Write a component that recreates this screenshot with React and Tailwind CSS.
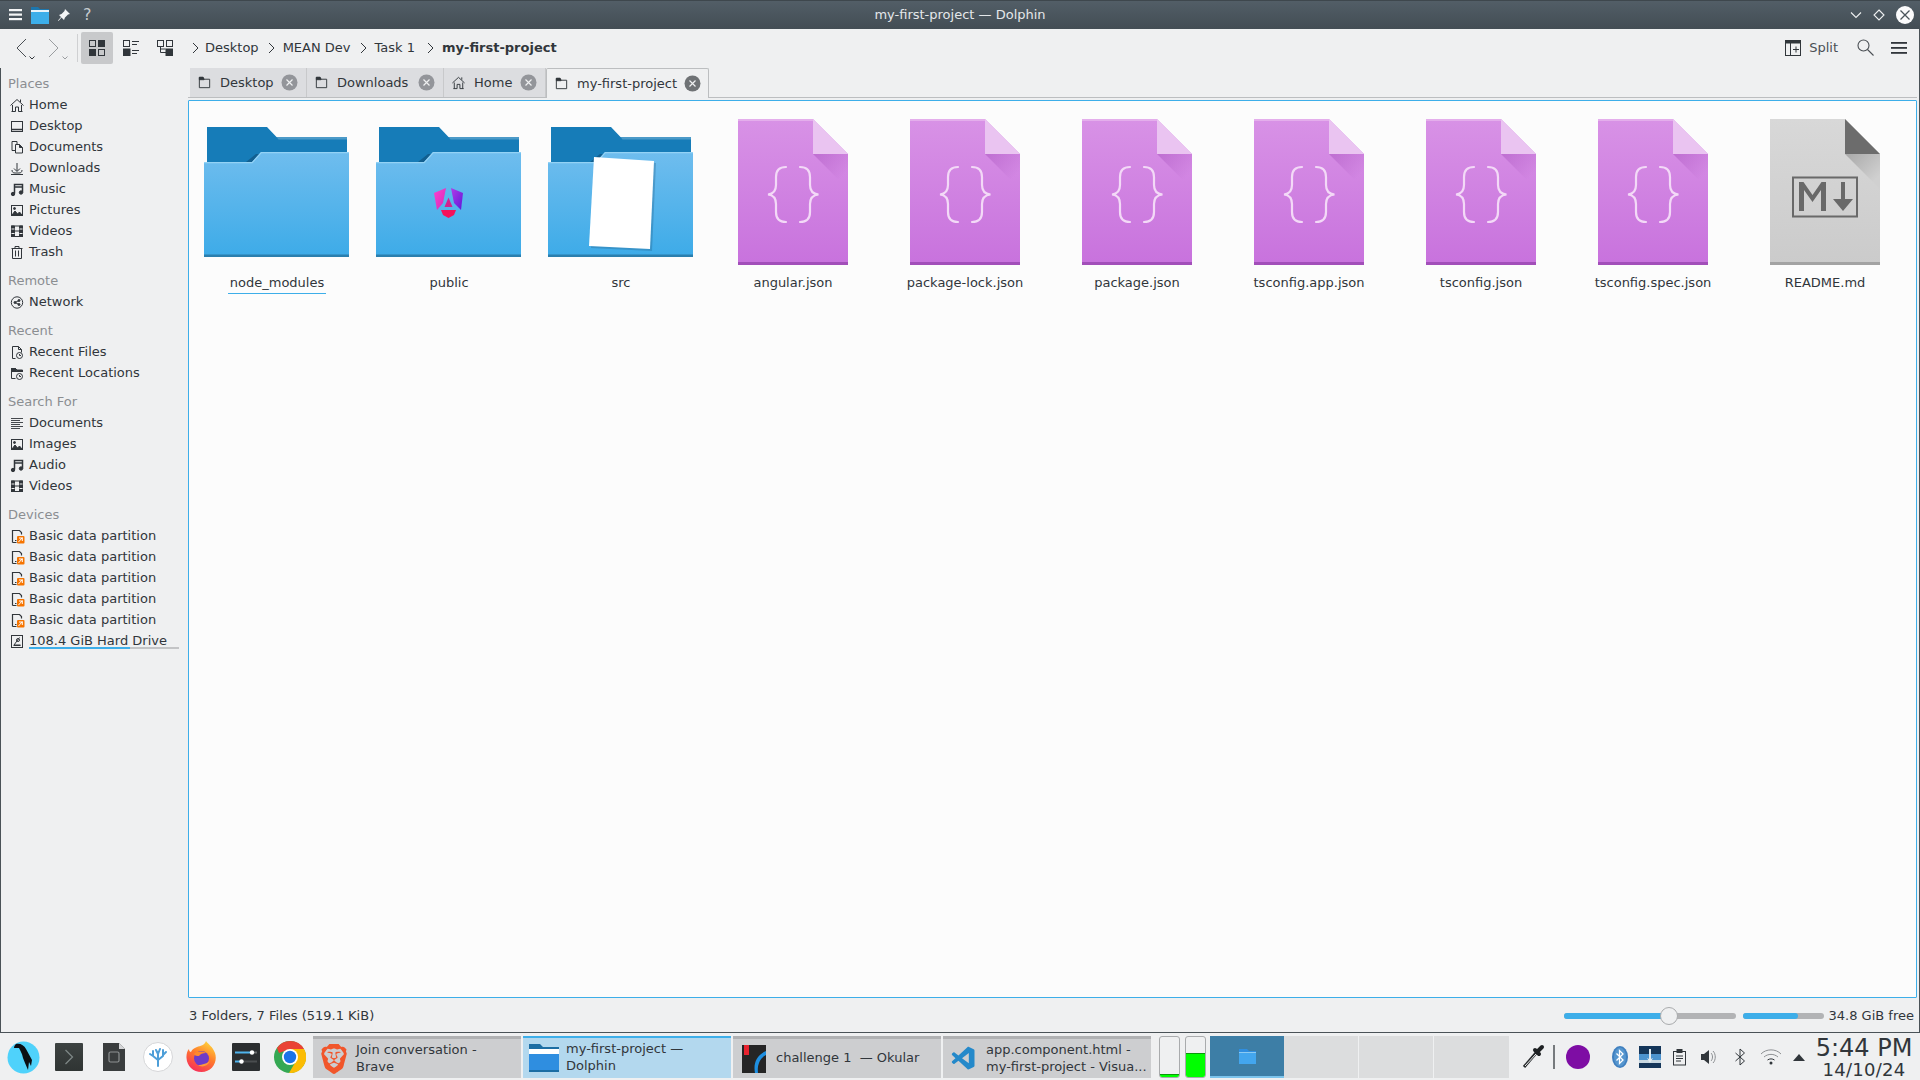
import React from 'react';
import { SiBrave } from 'react-icons/si';
import { VscVscode } from 'react-icons/vsc';

// small 16px monochrome glyphs for sidebar and tabs
const Glyph = ({ children, size = 16, className = '' }) => (
  <svg width={size} height={size} viewBox="0 0 16 16" fill="none" stroke="#31363b" strokeWidth="1" className={`shrink-0 ${className}`}>
    {children}
  </svg>
);

const glyphs = {
  home: <path d="M3.5 14.5V8M12.5 14.5V8M1.5 8.5L8 2.5l6.5 6M11.5 5V2.5M2.5 14.5h4V10h3v4.5h4" />,
  desktop: <><rect x="2.5" y="3.5" width="11" height="10" /><path d="M2.5 11.5h11" strokeWidth="1.5" /></>,
  documents: <><path d="M3 2.5h5v9H3z" /><path d="M6.5 5.5h4l3 3v5.5h-7z" fill="#eff0f1" /><path d="M10.5 5.5v3h3" fill="#31363b" /></>,
  downloads: <path d="M8 3v8M5 8.5l3 3 3-3M3 10c0 2 1 3 3 3h4c2 0 3-1 3-3M2 14.5h12" />,
  music: <><path d="M5.5 12.5V3.5h8v8M5.5 6h8" strokeWidth="1.5" /><circle cx="4" cy="13" r="1.7" fill="#31363b" /><circle cx="12" cy="11.5" r="1.7" fill="#31363b" /></>,
  pictures: <><rect x="2.5" y="3.5" width="11" height="10" /><path d="M3 13l3-4 2.5 3 2-2 2.5 3z" fill="#31363b" /><circle cx="5.5" cy="6.5" r="1" fill="#31363b" /></>,
  videos: <><rect x="2.5" y="3" width="11" height="10.5" strokeWidth="1" /><path d="M2.5 3h3v10.5h-3zM10.5 3h3v10.5h-3z" fill="#31363b" /><path d="M5 8h6M2.5 6h3M2.5 10.5h3M10.5 6h3M10.5 10.5h3" stroke="#31363b" /><path d="M2.5 6h3M2.5 10.5h3M10.5 6h3M10.5 10.5h3" stroke="#eff0f1" /></>,
  trash: <path d="M2.5 4.5h11M6 4.5V2.5h4v2M3.5 4.5v10h9v-10M6.5 6.5v6M9.5 6.5v6" />,
  network: <><circle cx="8" cy="8.5" r="5.7" /><circle cx="6" cy="8.5" r="1" fill="#31363b" /><circle cx="10" cy="6.5" r="1" fill="#31363b" /><circle cx="10" cy="10.5" r="1" fill="#31363b" /><path d="M6 8.5l4-2M6 8.5l4 2" /></>,
  recentFiles: <><path d="M3.5 14.5v-12h6l3 3v3M3.5 14.5h3M9.5 2.5v3h3" /><circle cx="10.5" cy="11.5" r="3" fill="#eff0f1" /><path d="M10.5 10v1.5h1.5" /></>,
  recentLocations: <><path d="M2.5 13.5v-10h4l1.5 1.5h5.5v2M2.5 13.5h4M2.5 3.5h4v3h-4z" fill="none" /><path d="M2.5 3.5h4l1 2h6v1h-11z" fill="#31363b" /><circle cx="10.5" cy="11.5" r="3" fill="#eff0f1" /><path d="M10.5 10v1.5h1.5" /></>,
  lines: <path d="M2 3.5h12M2 5.5h9M2 7.5h12M2 9.5h9M2 11.5h12M2 13.5h9" strokeWidth="0.9" />,
  partition: <><path d="M3.5 14.5v-12h7l2 2v2M3.5 14.5h4M6 12.5h1.5" strokeWidth="1.2" /><rect x="8" y="8" width="7.5" height="7.5" rx="1" fill="#f67400" stroke="none" /><path d="M9.5 14l4-4.5M10 10h3.3v3" stroke="#fff" strokeWidth="1" /></>,
  drive: <><rect x="2.5" y="2.5" width="11" height="12" /><path d="M10.5 4.5L5 12h6.5M4.5 12.5h7" /><circle cx="9" cy="7" r="1.5" /></>,
  folder: <><path d="M2.5 13.5v-11h4l1 2h6v9z" /><path d="M2.5 2.5h4l1 2.5h-5z" fill="#31363b" /></>,
};

const Section = ({ title, items }) => (
  <div className="mb-[8px]">
    <div className="h-[21px] flex items-center pl-[7px] text-[#8b8e91]">{title}</div>
    {items.map((it, i) => (
      <div key={i} className="relative h-[21px] flex items-center pl-[8px] gap-[4px]">
        <Glyph>{glyphs[it.icon]}</Glyph>
        <span className="whitespace-nowrap">{it.label}</span>
        {it.bar && (
          <div className="absolute left-[28px] top-[17px] w-[150px] h-[2px] bg-[#c3c4c6]">
            <div className="w-[101px] h-[2px] bg-[#3daee9]" />
          </div>
        )}
      </div>
    ))}
  </div>
);

const sidebar = [
  { title: 'Places', items: [
    { icon: 'home', label: 'Home' }, { icon: 'desktop', label: 'Desktop' }, { icon: 'documents', label: 'Documents' },
    { icon: 'downloads', label: 'Downloads' }, { icon: 'music', label: 'Music' }, { icon: 'pictures', label: 'Pictures' },
    { icon: 'videos', label: 'Videos' }, { icon: 'trash', label: 'Trash' },
  ] },
  { title: 'Remote', items: [{ icon: 'network', label: 'Network' }] },
  { title: 'Recent', items: [{ icon: 'recentFiles', label: 'Recent Files' }, { icon: 'recentLocations', label: 'Recent Locations' }] },
  { title: 'Search For', items: [
    { icon: 'lines', label: 'Documents' }, { icon: 'pictures', label: 'Images' }, { icon: 'music', label: 'Audio' }, { icon: 'videos', label: 'Videos' },
  ] },
  { title: 'Devices', items: [
    { icon: 'partition', label: 'Basic data partition' }, { icon: 'partition', label: 'Basic data partition' },
    { icon: 'partition', label: 'Basic data partition' }, { icon: 'partition', label: 'Basic data partition' },
    { icon: 'partition', label: 'Basic data partition' }, { icon: 'drive', label: '108.4 GiB Hard Drive', bar: true },
  ] },
];

const Close = ({ active }) => (
  <svg width="17" height="17" viewBox="0 0 17 17" className="shrink-0">
    <circle cx="8.5" cy="8.5" r="8" fill={active ? '#6f7275' : '#93959a'} />
    <path d="M5.5 5.5l6 6M11.5 5.5l-6 6" stroke="#eff0f1" strokeWidth="1.2" />
  </svg>
);

const tabs = [
  { label: 'Desktop', icon: 'folder', w: 'w-[117px]' },
  { label: 'Downloads', icon: 'folder', w: 'w-[137px]' },
  { label: 'Home', icon: 'home', w: 'w-[102px]' },
];

const FolderIcon = ({ id, children }) => (
  <svg width="145" height="130" viewBox="0 0 145 130" className="-ml-[2px]">
    <defs>
      <linearGradient id={`fold-${id}`} x1="0" y1="0" x2="0" y2="1">
        <stop offset="0" stopColor="#6fbdee" />
        <stop offset="1" stopColor="#3dabe8" />
      </linearGradient>
    </defs>
    <path d="M3 0H63L72.5 10H143V40H3Z" fill="#167cb8" />
    <path d="M72.5 10H143V12.5H74.5Z" fill="#4c9ac8" />
    <path d="M3 35H42L52 27H57V35H3Z" fill="#115f90" />
    <path d="M0 35H48L57 25H145V130H0Z" fill={`url(#fold-${id})`} />
    <path d="M0 35H48L57 25H145V26.2H57.5L48.5 36.2H0Z" fill="#93d2f5" />
    <rect x="0" y="127.5" width="145" height="2.5" fill="#2b7fae" />
    {children}
  </svg>
);

const AngularMark = () => (
  <g transform="translate(0 3)">
    <defs>
      <linearGradient id="ng-l" x1="0" y1="0" x2="1" y2="1">
        <stop offset="0" stopColor="#ff3fd0" />
        <stop offset="1" stopColor="#d22bb8" />
      </linearGradient>
      <linearGradient id="ng-r" x1="0" y1="0" x2="1" y2="1">
        <stop offset="0" stopColor="#b13be8" />
        <stop offset="1" stopColor="#5f17d8" />
      </linearGradient>
    </defs>
    <path d="M70 58L58 63L61 80L67 73Z" fill="url(#ng-l)" />
    <path d="M75 58L87 63L85 80L78 73Z" fill="url(#ng-r)" />
    <path d="M72.5 67.5L76.5 77H68.5Z" fill="#d6208e" />
    <path d="M65 80H80L78 85L72.5 88L67 85Z" fill="#f5115a" />
  </g>
);

const PaperMark = () => (
  <g>
    <path d="M48 32L108 36L104 124L43 121Z" fill="#25658f" opacity="0.35" />
    <path d="M46 30L106 34L102 122L41 119Z" fill="#fff" />
  </g>
);

const JsonIcon = ({ id }) => (
  <svg width="110" height="146" viewBox="0 0 110 146">
    <defs>
      <linearGradient id={`doc-${id}`} x1="0" y1="0" x2="0" y2="1">
        <stop offset="0" stopColor="#d892e6" />
        <stop offset="1" stopColor="#c872dd" />
      </linearGradient>
      <linearGradient id={`shade-${id}`} x1="0" y1="0" x2="1" y2="1">
        <stop offset="0" stopColor="#b765cb" stopOpacity="0.75" />
        <stop offset="0.75" stopColor="#b765cb" stopOpacity="0" />
      </linearGradient>
    </defs>
    <path d="M0 0H75L110 35V146H0Z" fill={`url(#doc-${id})`} />
    <path d="M0 0H75V2H0Z" fill="#e4aeec" />
    <path d="M75 35H110V70Z" fill={`url(#shade-${id})`} />
    <path d="M75 0L110 35H75Z" fill="#eac4f1" />
    <rect x="0" y="143" width="110" height="3" fill="#a24fb9" />
    <g fill="none" stroke="#f3d9f7" strokeWidth="2.2" strokeLinecap="round">
      <path d="M48 48C41 48 38 52 38 58V66C38 72 35 75 30 75.5C35 76 38 79 38 85V93C38 99 41 103 48 103" />
      <path d="M62 48C69 48 72 52 72 58V66C72 72 75 75 80.5 75.5C75 76 72 79 72 85V93C72 99 69 103 62 103" />
    </g>
  </svg>
);

const MarkdownIcon = () => (
  <svg width="110" height="146" viewBox="0 0 110 146">
    <defs>
      <linearGradient id="md-body" x1="0" y1="0" x2="0" y2="1">
        <stop offset="0" stopColor="#d8d8d8" />
        <stop offset="1" stopColor="#cbcbcb" />
      </linearGradient>
      <linearGradient id="md-shade" x1="0" y1="0" x2="1" y2="1">
        <stop offset="0" stopColor="#a8a8a8" />
        <stop offset="0.8" stopColor="#d0d0d0" />
      </linearGradient>
    </defs>
    <path d="M0 0H75L110 35V146H0Z" fill="url(#md-body)" />
    <path d="M75 35H110V70Z" fill="url(#md-shade)" />
    <path d="M75 0L110 35H75Z" fill="#6c6c6c" />
    <rect x="0" y="143" width="110" height="3" fill="#a3a3a3" />
    <rect x="23" y="58.5" width="64" height="39" fill="none" stroke="#696969" strokeWidth="2" />
    <path d="M29 92V63H33.5L42.5 76L51.5 63H56V92H51V71L42.5 83L34 71V92Z" fill="#696969" />
    <path d="M71 63H75V80H83L73 92L63 80H71Z" fill="#696969" />
  </svg>
);

const files = [
  { name: 'node_modules', icon: <FolderIcon id="a" />, focus: true },
  { name: 'public', icon: <FolderIcon id="b"><AngularMark /></FolderIcon> },
  { name: 'src', icon: <FolderIcon id="c"><PaperMark /></FolderIcon> },
  { name: 'angular.json', icon: <JsonIcon id="d" /> },
  { name: 'package-lock.json', icon: <JsonIcon id="e" /> },
  { name: 'package.json', icon: <JsonIcon id="f" /> },
  { name: 'tsconfig.app.json', icon: <JsonIcon id="g" /> },
  { name: 'tsconfig.json', icon: <JsonIcon id="h" /> },
  { name: 'tsconfig.spec.json', icon: <JsonIcon id="i" /> },
  { name: 'README.md', icon: <MarkdownIcon /> },
];

const ParrotLogo = () => (
  <svg width="33" height="33" viewBox="0 0 33 33">
    <circle cx="16.5" cy="16.5" r="16" fill="#4fd2fb" />
    <path d="M9 3C13 2 17 4 19 8C21 12 23 15 25 19L24 25L22 21L21 29L18 22L16 17C15 12 13 9 12 7L7 7C7 5 8 4 9 3Z" fill="#0b0f14" />
  </svg>
);

const TerminalLogo = () => (
  <div className="w-[28px] h-[28px] bg-gradient-to-b from-[#3d4342] to-[#2f3433] flex items-center justify-center rounded-[1px]">
    <svg width="10" height="16" viewBox="0 0 10 16" fill="none" stroke="#7d8685" strokeWidth="1.3"><path d="M1.5 1l7 7-7 7" /></svg>
  </div>
);

const NoteLogo = () => (
  <svg width="22" height="28" viewBox="0 0 22 28">
    <path d="M0 0H16L22 6V28H0Z" fill="#3a3d3e" />
    <path d="M16 0L22 6H16Z" fill="#d5d6d8" />
    <rect x="6" y="9" width="10" height="10" rx="1.5" fill="none" stroke="#8d9192" strokeWidth="1.2" />
  </svg>
);

const CoralLogo = () => (
  <svg width="30" height="30" viewBox="0 0 30 30">
    <circle cx="15" cy="15" r="14.5" fill="#fff" stroke="#d5d6d8" />
    <g fill="none" stroke="#4d9ed8" strokeWidth="2" strokeLinecap="round">
      <path d="M15 24V12M15 18l-5-4M10 14V9M10 14l-3-2M15 18l5-4M20 14V8M20 13l3-3M15 12l-2-4M15 12l2-5" />
    </g>
  </svg>
);

const FirefoxLogo = () => (
  <svg width="31" height="32" viewBox="0 0 31 32">
    <defs>
      <linearGradient id="ff-a" x1="0.7" y1="0" x2="0.2" y2="1">
        <stop offset="0" stopColor="#ffd23a" />
        <stop offset="0.45" stopColor="#ff7a2c" />
        <stop offset="1" stopColor="#f6275e" />
      </linearGradient>
    </defs>
    <path d="M20 0C22 3 27 6 29 12C32 21 26 31 15.500 31C7 31 1 25 0.500 17C0.300 14 1 10 3 8C3 10 4 11 5 11C6 8 9 7 11 6C14 5 19 4 20 0Z" fill="url(#ff-a)" />
    <circle cx="15.500" cy="17.500" r="7.500" fill="#6e3bc9" />
    <path d="M8 13C11 10 17 10 20 12C17 12 14 13 13 15C11 15 9 15 8 13Z" fill="#ff8a2c" />
    <path d="M12 24C16 27 22 25 24 20C22 22 16 24 12 24Z" fill="#ff9a3a" />
  </svg>
);

const SlidersLogo = () => (
  <svg width="28" height="28" viewBox="0 0 28 28">
    <rect width="28" height="28" rx="1" fill="#2b2e30" />
    <path d="M3 9.500H20" stroke="#4fb4ee" strokeWidth="2" />
    <path d="M20 9.500H25" stroke="#686b6d" strokeWidth="2" />
    <circle cx="20" cy="9.500" r="2.200" fill="#fff" />
    <path d="M3 18.500H9" stroke="#4fb4ee" strokeWidth="2" />
    <path d="M9 18.500H25" stroke="#4a4d4f" strokeWidth="2" />
    <circle cx="9.500" cy="18.500" r="2.200" fill="#fff" />
  </svg>
);

const ChromeLogo = () => (
  <svg width="32" height="32" viewBox="0 0 32 32">
    <circle cx="16" cy="16" r="16" fill="#34a853" />
    <path d="M16 0A16 16 0 0 1 30 8L16 8L5 12L3 7A16 16 0 0 1 16 0Z" fill="#ea4335" />
    <path d="M30 8A16 16 0 0 1 15 32L22 20L16 8Z" fill="#fbbc04" />
    <circle cx="16" cy="16" r="8" fill="#fff" />
    <circle cx="16" cy="16" r="6.200" fill="#1a73e8" />
  </svg>
);

const DolphinTaskIcon = () => (
  <svg width="30" height="28" viewBox="0 0 30 28">
    <path d="M0 0H11L14 3H30V12H0Z" fill="#1c6ea4" />
    <rect x="0" y="5" width="30" height="5" fill="#fff" />
    <path d="M0 10H30V28H0Z" fill="#2f8ee0" />
    <rect x="0" y="26" width="30" height="2" fill="#1c6ea4" />
  </svg>
);

const OkularIcon = () => (
  <svg width="24" height="28" viewBox="0 0 24 28">
    <rect width="24" height="28" fill="#252525" />
    <rect x="2" y="0" width="5" height="10" fill="#e8232f" />
    <path d="M24 6C15 10 11 18 13 28H16C15 20 18 13 24 10Z" fill="#1f8fe0" />
  </svg>
);

const Task = ({ icon, active, iconBox, children }) => (
  <div className={`w-[208px] h-full flex items-center ${active ? 'bg-[#b3d8ee] border-t-[2px] border-[#3daee9]' : 'bg-[#cdced0] border-t-[3px] border-[#b0b1b3]'}`}>
    <div className={`${iconBox} flex items-center justify-start shrink-0`}>{icon}</div>
    <div className="-mt-[2px] text-[#31363b] leading-[17px]">{children}</div>
  </div>
);

const launchers = [
  { w: 'w-[46px]', el: <ParrotLogo /> },
  { w: 'w-[46px]', el: <TerminalLogo /> },
  { w: 'w-[44px]', el: <NoteLogo /> },
  { w: 'w-[44px]', el: <CoralLogo /> },
  { w: 'w-[43px]', el: <FirefoxLogo /> },
  { w: 'w-[45px]', el: <SlidersLogo /> },
  { w: 'w-[44px]', el: <ChromeLogo /> },
];

export default function App() {
  return (
    <div className="w-[1920px] h-[1080px] overflow-hidden flex flex-col bg-[#eff0f1] text-[13px] text-[#31363b] font-['DejaVu_Sans',sans-serif]">
      {/* Title bar */}
      <div className="relative h-[29px] shrink-0 flex items-center bg-gradient-to-b from-[#525e67] to-[#434d54] border-t border-[#3e474d] text-[#e4e7ea]">
        <div className="flex items-center pl-[9px]">
          <svg width="14" height="12" viewBox="0 0 14 12" fill="#f4f5f6"><rect y="0" width="13" height="2.200" /><rect y="4.500" width="13" height="2.200" /><rect y="9" width="13" height="2.200" /></svg>
          <svg width="18" height="18" viewBox="0 0 18 18" className="ml-[8px]">
            <path d="M0 1H7L9 3H18V7H0Z" fill="#1d76ad" />
            <rect x="0" y="4" width="18" height="2" fill="#e8f3fa" />
            <rect x="0" y="6" width="18" height="12" fill="#3daee9" />
          </svg>
          <svg width="14" height="14" viewBox="0 0 14 14" fill="#f4f5f6" className="ml-[8px]"><path d="M8 1l5 5-2 .5-3 3L7 12 4.500 9.500 1.500 13 1 12.500 4 9 2 7l2.500-.9 3-3z" /></svg>
          <span className="ml-[12px] text-[16px] text-[#c7ccd0] leading-none">?</span>
        </div>
        <div className="absolute left-0 right-0 text-center pointer-events-none">my-first-project — Dolphin</div>
        <div className="ml-auto flex items-center pr-[6px] gap-[11px]">
          <svg width="12" height="8" viewBox="0 0 12 8" fill="none" stroke="#eef0f1" strokeWidth="1.100"><path d="M1 1.500l5 5 5-5" /></svg>
          <svg width="12" height="12" viewBox="0 0 12 12" fill="none" stroke="#eef0f1" strokeWidth="1.100"><path d="M6 1l5 5-5 5-5-5z" /></svg>
          <svg width="18" height="18" viewBox="0 0 18 18"><circle cx="9" cy="9" r="9" fill="#fbfbfc" /><path d="M4.500 4.500l9 9M13.500 4.500l-9 9" stroke="#4a545b" strokeWidth="1.300" /></svg>
        </div>
      </div>

      {/* Toolbar */}
      <div className="h-[39px] shrink-0 flex items-center pb-[2px] border-r border-[#4a5257]">
        <div className="relative w-[77px] h-full flex items-center">
          <svg width="12" height="20" viewBox="0 0 12 20" fill="none" stroke="#4a4f54" strokeWidth="1" className="ml-[15px]"><path d="M11 1L2 10l9 9" /></svg>
          <svg width="6" height="4" viewBox="0 0 6 4" fill="none" stroke="#31363b" className="absolute left-[29px] top-[27px]"><path d="M0.500 0.500L3 3l2.500-2.500" /></svg>
          <svg width="12" height="20" viewBox="0 0 12 20" fill="none" stroke="#9a9da0" strokeWidth="1" className="ml-[21px]"><path d="M1 1l9 9-9 9" /></svg>
          <svg width="6" height="4" viewBox="0 0 6 4" fill="none" stroke="#9a9da0" className="absolute left-[62px] top-[27px]"><path d="M0.500 0.500L3 3l2.500-2.500" /></svg>
        </div>
        <div className="w-px h-[28px] bg-[#cfd0d2]" />
        <div className="ml-[3px] w-[32px] h-[32px] bg-[#c8c9cb] rounded-[2px] flex items-center justify-center">
          <svg width="16" height="16" viewBox="0 0 16 16" fill="#31363b"><rect x="0.500" y="0.500" width="6" height="6" fill="none" stroke="#31363b" /><rect x="9" y="0" width="7" height="7" /><rect x="0" y="9" width="7" height="7" /><rect x="9.500" y="9.500" width="6" height="6" fill="none" stroke="#31363b" /></svg>
        </div>
        <div className="ml-[10px] w-[16px] h-[16px]">
          <svg width="16" height="16" viewBox="0 0 16 16" fill="none" stroke="#31363b"><rect x="0.500" y="0.500" width="6" height="6" /><path d="M9 1.500h7M9 4.500h5M9 10.500h7M9 13.500h5" /><rect x="0" y="9" width="7" height="7" fill="#31363b" /></svg>
        </div>
        <div className="ml-[18px] w-[16px] h-[16px]">
          <svg width="16" height="16" viewBox="0 0 16 16" fill="none" stroke="#31363b"><rect x="0.500" y="0.500" width="6" height="6" /><rect x="9.500" y="0.500" width="6" height="6" /><path d="M3.500 7v5.500H9M3.500 9h5" /><rect x="9" y="9" width="7" height="7" fill="#31363b" /></svg>
        </div>
        <div className="ml-[19px] flex items-center text-[13px]">
          <Crumb />
          <span className="ml-[6px]">Desktop</span>
          <Crumb className="ml-[9px] mr-[8px]" />
          <span>MEAN Dev</span>
          <Crumb className="ml-[9px] mr-[8px]" />
          <span>Task 1</span>
          <Crumb className="ml-[12px] mr-[8px]" />
          <span className="font-bold">my-first-project</span>
        </div>
        <div className="ml-auto flex items-center pr-[12px]">
          <svg width="16" height="16" viewBox="0 0 16 16" fill="none" stroke="#31363b"><rect x="0.500" y="0.500" width="15" height="15" /><rect x="0" y="0" width="16" height="3" fill="#31363b" /><path d="M5.500 3v12M8 9.500h6M11 6.500v6" /></svg>
          <span className="ml-[8px] text-[#4a4f54]">Split</span>
          <svg width="17" height="17" viewBox="0 0 17 17" fill="none" stroke="#4a4f54" strokeWidth="1.100" className="ml-[19px]"><circle cx="6.500" cy="6.500" r="5.500" /><path d="M10.500 10.500l6 6" /></svg>
          <svg width="16" height="14" viewBox="0 0 16 14" fill="#31363b" className="ml-[17px]"><rect y="1" width="16" height="1.800" /><rect y="6" width="16" height="1.800" /><rect y="11" width="16" height="1.800" /></svg>
        </div>
      </div>

      {/* Body */}
      <div className="flex-1 min-h-0 flex border-l border-r border-b border-[#4a5257]">
        <div className="w-[187px] shrink-0 pt-[5px]">
          {sidebar.map((s) => <Section key={s.title} title={s.title} items={s.items} />)}
        </div>
        <div className="flex-1 min-w-0 flex flex-col">
          {/* Tabs */}
          <div className="h-[30px] shrink-0 flex border-b border-[#bcbec0] mr-[2px] pl-[2px]">
            {tabs.map((t) => (
              <div key={t.label} className={`${t.w} flex items-center pl-[7px] bg-[#dcdde0] border-r border-[#c8c9cb]`}>
                <Glyph size={15}>{glyphs[t.icon]}</Glyph>
                <span className="ml-[8px]">{t.label}</span>
                <div className="ml-auto mr-[8px]"><Close /></div>
              </div>
            ))}
            <div className="w-[163px] h-[30px] flex items-center pl-[7px] bg-[#eff0f1] border border-b-0 border-[#bcbec0] rounded-t-[2px]">
              <Glyph size={15}>{glyphs.folder}</Glyph>
              <span className="ml-[8px]">my-first-project</span>
              <div className="ml-auto mr-[7px]"><Close active /></div>
            </div>
          </div>
          {/* File view */}
          <div className="flex-1 min-h-0 mt-[2px] mr-[2px] bg-[#fcfcfc] border border-[#3daee9] rounded-[1px] pt-[18px] pl-[2px]">
            <div className="flex">
              {files.map((f) => (
                <div key={f.name} className="w-[172px] shrink-0 flex flex-col items-center">
                  <div className="h-[146px] flex items-center justify-center">{f.icon}</div>
                  <div className={`mt-[10px] h-[19px] leading-[16px] px-[2px] whitespace-nowrap ${f.focus ? 'border-b border-[#3daee9]' : ''}`}>{f.name}</div>
                </div>
              ))}
            </div>
          </div>
          {/* Status bar */}
          <div className="h-[34px] shrink-0 flex items-center pt-[2px] pl-[1px] pr-[5px]">
            <span>3 Folders, 7 Files (519.1 KiB)</span>
            <div className="ml-auto relative w-[172px] h-[6px] rounded-full bg-[#b2b3b5]">
              <div className="w-[106px] h-[6px] rounded-full bg-[#3daee9]" />
              <div className="absolute left-[96px] top-[-6px] w-[18px] h-[18px] rounded-full bg-[#eff0f1] border border-[#a9abad]" />
            </div>
            <div className="ml-[7px] w-[81px] h-[6px] rounded-full bg-[#b2b3b5]">
              <div className="w-[55px] h-[6px] rounded-full bg-[#3daee9]" />
            </div>
            <span className="ml-[5px] whitespace-nowrap">34.8 GiB free</span>
          </div>
        </div>
      </div>

      {/* Taskbar */}
      <div className="h-[47px] shrink-0 flex items-center pt-[3px] pb-[2px]">
        {launchers.map((l, i) => (
          <div key={i} className={`${l.w} h-full flex items-center justify-center`}>{l.el}</div>
        ))}
        <div className="ml-px flex gap-[2px] h-full">
          <Task iconBox="w-[43px] pl-[6px]" icon={<SiBrave size={30} color="#f1562b" />}>Join conversation -<br />Brave</Task>
          <Task active iconBox="w-[43px] pl-[6px]" icon={<DolphinTaskIcon />}>my-first-project —<br />Dolphin</Task>
          <Task iconBox="w-[43px] pl-[9px]" icon={<OkularIcon />}>challenge 1&nbsp; — Okular</Task>
          <Task iconBox="w-[43px] pl-[7px]" icon={<VscVscode size={28} color="#2489ca" />}>app.component.html -<br />my-first-project - Visua...</Task>
        </div>
        {/* Virtual desktops meters and pager */}
        <div className="ml-[8px] h-full flex gap-[5px]">
          <Meter level="h-[3px]" />
          <Meter level="h-[24px]" />
        </div>
        <div className="ml-[4px] h-full w-[74px] bg-[#3d7ea6] border-b-[2px] border-[#7cc4ec] flex items-center justify-center">
          <svg width="17" height="16" viewBox="0 0 17 16"><path d="M0 1H8L10 3H17V16H0Z" fill="#2f8ee0" /><rect y="4" width="17" height="12" fill="#43a6ee" /><rect y="4" width="17" height="1" fill="#8ccaf3" /></svg>
        </div>
        <div className="h-full w-[75px] bg-[#dcddde] border-r border-[#eff0f1]" />
        <div className="h-full w-[75px] bg-[#dcddde] border-r border-[#eff0f1]" />
        <div className="h-full w-[75px] bg-[#dcddde]" />

        {/* Tray */}
        <svg width="24" height="26" viewBox="0 0 24 26" className="ml-[12px] shrink-0">
          <path d="M3 23L15 9" stroke="#26292b" strokeWidth="3" />
          <path d="M4 22L15 10" stroke="#eff0f1" strokeWidth="1" />
          <path d="M14 6L18 10M16 8L21 3" stroke="#1e2123" strokeWidth="4" strokeLinecap="round" />
        </svg>
        <div className="ml-[8px] w-[2px] h-[24px] bg-[#767a7d] shrink-0" />
        <div className="ml-[11px] w-[24px] h-[24px] rounded-full bg-[#7e0da4] shrink-0" />
        <svg width="16" height="22" viewBox="0 0 16 22" className="ml-[22px] shrink-0">
          <ellipse cx="8" cy="11" rx="8" ry="11" fill="#3f7fbf" />
          <ellipse cx="8" cy="11" rx="6" ry="9.500" fill="#5596cf" />
          <path d="M4.500 7.500L11 14l-3.500 3.500v-13L11 8l-6.500 6.500" fill="none" stroke="#fff" strokeWidth="1.300" />
        </svg>
        <svg width="22" height="22" viewBox="0 0 22 22" className="ml-[11px] shrink-0">
          <rect width="22" height="22" fill="#15365a" />
          <rect y="8" width="22" height="6" fill="#4c93cf" />
          <rect y="14" width="22" height="3" fill="#c8d8e2" />
          <path d="M10 3h2v10l2-1-3 5-3-5 2 1z" fill="#e6edf2" />
        </svg>
        <svg width="16" height="17" viewBox="0 0 16 17" fill="none" stroke="#31363b" className="ml-[11px] shrink-0">
          <rect x="1.500" y="2.500" width="12" height="13.500" />
          <rect x="5" y="0.500" width="5" height="3" fill="#31363b" />
          <path d="M4 7h7M4 9.500h7M4 12h5" />
        </svg>
        <svg width="18" height="16" viewBox="0 0 18 16" className="ml-[13px] shrink-0">
          <path d="M0 5H3L8 1V15L3 11H0Z" fill="#31363b" />
          <path d="M10 4c2 2 2 6 0 8M12 2c3 3 3 9 0 12" fill="none" stroke="#8d9093" />
        </svg>
        <svg width="12" height="18" viewBox="0 0 12 18" fill="none" stroke="#31363b" className="ml-[15px] shrink-0">
          <path d="M1.500 5l9 8-4.500 4V1l4.500 4-9 8" />
        </svg>
        <svg width="22" height="16" viewBox="0 0 22 16" fill="none" stroke="#8d9093" className="ml-[14px] shrink-0">
          <path d="M1 5c5-5.500 15-5.500 20 0M4 8c4-3.500 10-3.500 14 0" />
          <path d="M7.500 11c2-1.500 5-1.500 7 0" stroke="#31363b" />
          <circle cx="11" cy="14" r="1.500" fill="#31363b" stroke="none" />
        </svg>
        <svg width="12" height="7" viewBox="0 0 12 7" className="ml-[11px] shrink-0"><path d="M6 0l6 7H0z" fill="#31363b" /></svg>
        <div className="ml-[8px] w-[102px] shrink-0 text-center text-[#31363b]">
          <div className="text-[24px] leading-[25px] whitespace-nowrap">5:44 PM</div>
          <div className="text-[18px] tracking-[0.3px] leading-[17px] whitespace-nowrap">14/10/24</div>
        </div>
      </div>
    </div>
  );
}

function Crumb({ className = '' }) {
  return (
    <svg width="7" height="12" viewBox="0 0 7 12" fill="none" stroke="#31363b" className={className}>
      <path d="M1 1l5 5-5 5" />
    </svg>
  );
}

function Meter({ level }) {
  return (
    <div className="w-[21px] h-full rounded-[3px] border border-[#a9abad] bg-[#eff0f1] flex flex-col justify-end overflow-hidden">
      <div className={`${level} bg-[#00ff00] border-t border-[#0a9a0a]`} />
    </div>
  );
}
